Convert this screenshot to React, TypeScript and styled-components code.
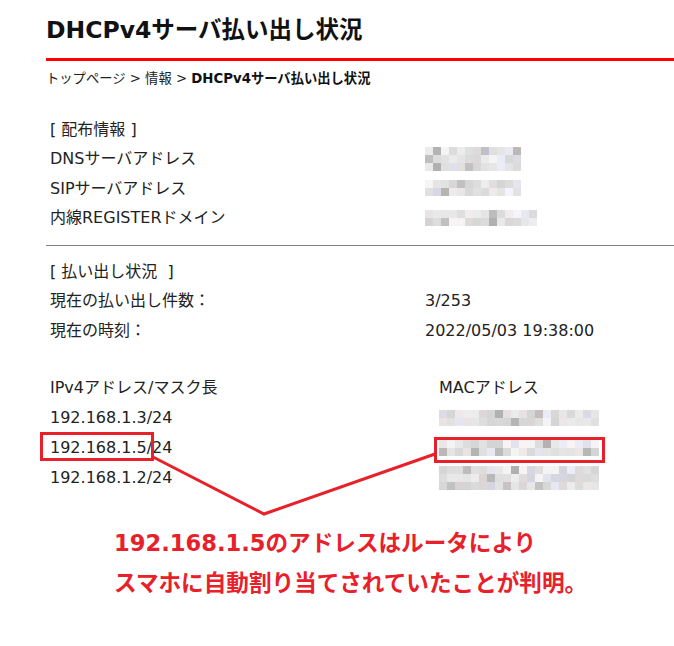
import styled, { createGlobalStyle } from 'styled-components';

const GlobalStyle = createGlobalStyle`
  html, body {
    margin: 0;
    padding: 0;
    background: #fff;
  }
  body {
    font-family: 'DejaVu Sans', 'Noto Sans CJK JP', sans-serif;
    color: #222;
  }
`;

// 目隠し用のモザイク（ピクセル値は固定シードから生成）
const mosaicColors = (seed: number, count: number) => {
  let s = seed;
  const next = () => {
    s = (s * 9301 + 49297) % 233280;
    return s / 233280;
  };
  const out: string[] = [];
  for (let i = 0; i < count; i++) {
    const r = next();
    const base = r < 0.12 ? 176 + Math.floor(next() * 20) : r < 0.22 ? 244 : 212 + Math.floor(next() * 26);
    const tint = next();
    const rr = base + (tint > 0.8 ? 5 : 0);
    const bb = base + (tint < 0.2 ? 10 : 0);
    out.push(`rgb(${Math.min(rr, 250)}, ${base}, ${Math.min(bb, 250)})`);
  }
  return out;
};

interface MosaicProps {
  cols: number;
  rows: number;
  seed: number;
}

const Mosaic = ({ cols, rows, seed }: MosaicProps) => {
  const colors = mosaicColors(seed, cols * rows);
  return (
    <StMosaic $cols={cols}>
      {colors.map((c, i) => (
        <span key={i} style={{ background: c }} />
      ))}
    </StMosaic>
  );
};

const App = () => {
  return (
    <>
      <GlobalStyle />
      <StPage>
        <StTitle>DHCPv4サーバ払い出し状況</StTitle>
        <StBreadcrumb>
          トップページ &gt; 情報 &gt; <b>DHCPv4サーバ払い出し状況</b>
        </StBreadcrumb>

        <StSection>
          <StHeading>[ 配布情報 ]</StHeading>
          <StRow>
            <span>DNSサーバアドレス</span>
            <Mosaic cols={12} rows={3} seed={11} />
          </StRow>
          <StRow>
            <span>SIPサーバアドレス</span>
            <Mosaic cols={12} rows={2} seed={23} />
          </StRow>
          <StRow>
            <span>内線REGISTERドメイン</span>
            <Mosaic cols={14} rows={2} seed={37} />
          </StRow>
        </StSection>

        <StDivider />

        <StSection $top={11}>
          <StHeading>{'[ 払い出し状況 \u00a0]'}</StHeading>
          <StRow>
            <span>現在の払い出し件数：</span>
            <span>3/253</span>
          </StRow>
          <StRow>
            <span>現在の時刻：</span>
            <span>2022/05/03 19:38:00</span>
          </StRow>
        </StSection>

        <StTable>
          <StTableRow>
            <span>IPv4アドレス/マスク長</span>
            <span>MACアドレス</span>
          </StTableRow>
          <StTableRow>
            <span>192.168.1.3/24</span>
            <Mosaic cols={20} rows={2} seed={51} />
          </StTableRow>
          <StTableRow>
            <span>192.168.1.5/24</span>
            <Mosaic cols={20} rows={2} seed={67} />
          </StTableRow>
          <StTableRow>
            <span>192.168.1.2/24</span>
            <Mosaic cols={20} rows={3} seed={83} />
          </StTableRow>
        </StTable>

        <StNote>
          <p>192.168.1.5のアドレスはルータにより</p>
          <p>スマホに自動割り当てされていたことが判明。</p>
        </StNote>

        <StOverlay viewBox="0 0 674 646" width="674" height="646">
          <g fill="none" stroke="#e8202a" strokeWidth="3">
            <rect x="41.5" y="433.5" width="111" height="26" />
            <rect x="435.5" y="438.5" width="168" height="23" />
            <polyline points="153,457 264,514 435,454" strokeLinejoin="miter" />
          </g>
        </StOverlay>
      </StPage>
    </>
  );
};

const StPage = styled.div`
  position: relative;
  width: 674px;
  height: 646px;
  padding-left: 46px;
  box-sizing: border-box;
  overflow: hidden;
`;

const StTitle = styled.h1`
  margin: 0;
  padding: 15px 0 13px;
  font-size: 23.5px;
  line-height: 30px;
  font-weight: bold;
  color: #111;
  border-bottom: 3px solid #ff0000;
`;

const StBreadcrumb = styled.div`
  margin-top: 8px;
  font-size: 13.3px;
  line-height: 20px;
  color: #222;

  b {
    color: #111;
  }
`;

const StSection = styled.div<{ $top?: number }>`
  padding: ${p => p.$top ?? 26}px 0 0 4px;
  font-size: 16px;
`;

const StHeading = styled.div`
  line-height: 29.3px;
  white-space: pre;
`;

const StRow = styled.div`
  display: grid;
  grid-template-columns: 375px 1fr;
  align-items: center;
  height: 29.3px;
  line-height: 29.3px;
`;

const StDivider = styled.hr`
  margin: 13px 0 0;
  border: none;
  border-top: 1.5px solid #808080;
`;

const StTable = styled.div`
  padding: 28px 0 0 4px;
  font-size: 16px;
`;

const StTableRow = styled.div`
  display: grid;
  grid-template-columns: 389px 1fr;
  align-items: center;
  height: 30px;
  line-height: 30px;
`;

const StMosaic = styled.div<{ $cols: number }>`
  display: grid;
  grid-template-columns: repeat(${p => p.$cols}, 8px);
  grid-auto-rows: 8px;
  width: max-content;

  span {
    display: block;
  }
`;

const StNote = styled.div`
  margin-top: 30px;
  padding-left: 68px;
  color: #e8202a;
  font-size: 22.6px;
  font-weight: bold;
  line-height: 40px;

  p {
    margin: 0;
  }
`;

const StOverlay = styled.svg`
  position: absolute;
  top: 0;
  left: 0;
  pointer-events: none;
`;

export default App;
